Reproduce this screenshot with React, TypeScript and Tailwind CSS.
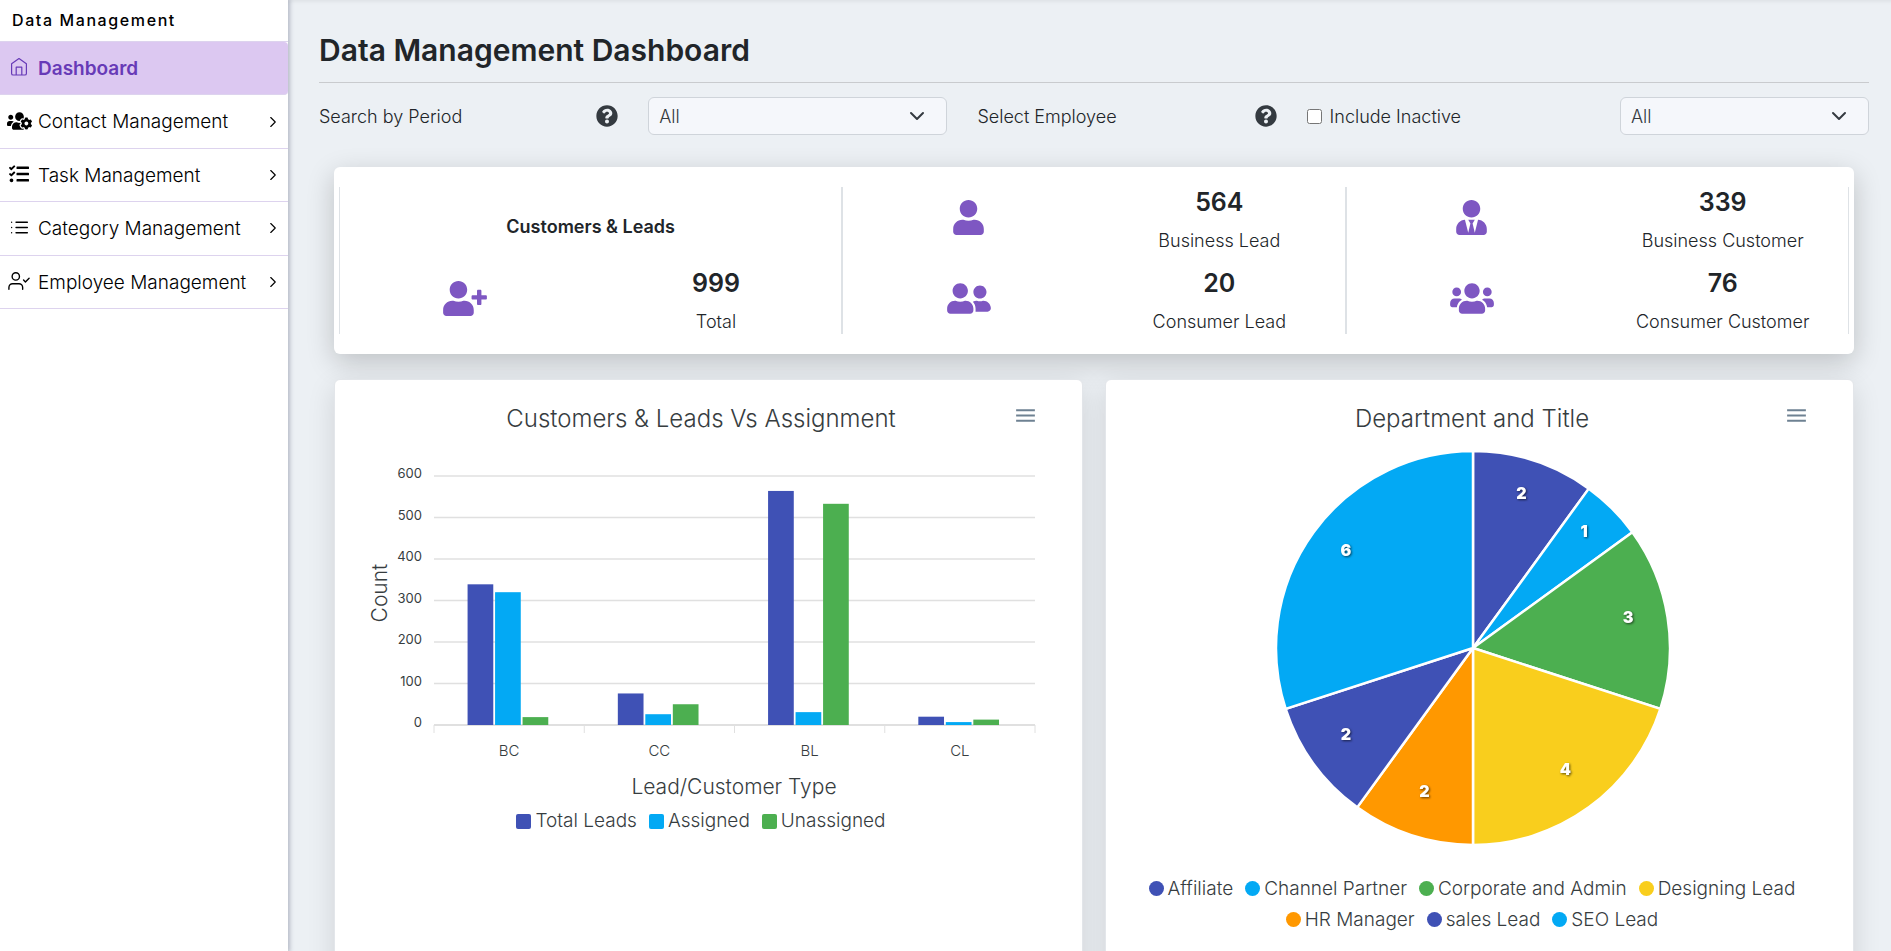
import { useState } from 'react'
import type { ReactNode } from 'react'
import {
  FaQuestionCircle,
  FaTasks,
  FaUser,
  FaUserFriends,
  FaUserPlus,
  FaUserTie,
  FaUsers,
  FaUsersCog,
} from 'react-icons/fa'
import { FiChevronRight, FiList, FiUserCheck } from 'react-icons/fi'
import { MdMenu } from 'react-icons/md'

const INDIGO = '#3f51b5'
const BLUE = '#03a9f4'
const GREEN = '#4caf50'
const YELLOW = '#f9ce1d'
const ORANGE = '#ff9800'

const menuItems = [
  { id: 'contact', label: 'Contact Management', icon: <FaUsersCog size={20} className="h-5 w-[25px]" /> },
  { id: 'task', label: 'Task Management', icon: <FaTasks size={20} /> },
  { id: 'category', label: 'Category Management', icon: <FiList size={21} strokeWidth={1.5} /> },
  { id: 'employee', label: 'Employee Management', icon: <FiUserCheck size={22} strokeWidth={1.5} /> },
]

const series = [
  { name: 'Total Leads', color: INDIGO, data: [339, 76, 564, 20] },
  { name: 'Assigned', color: BLUE, data: [320, 26, 31, 7] },
  { name: 'Unassigned', color: GREEN, data: [19, 50, 533, 13] },
]

const departments = [
  { name: 'Affiliate', value: 2, color: INDIGO },
  { name: 'Channel Partner', value: 1, color: BLUE },
  { name: 'Corporate and Admin', value: 3, color: GREEN },
  { name: 'Designing Lead', value: 4, color: YELLOW },
  { name: 'HR Manager', value: 2, color: ORANGE },
  { name: 'sales Lead', value: 2, color: INDIGO },
  { name: 'SEO Lead', value: 6, color: BLUE },
]

function HomeIcon() {
  return (
    <svg viewBox="0 0 18 20" className="h-5 w-[18px] fill-none stroke-current" strokeWidth="1.2" strokeLinejoin="round">
      <path d="M9 1.6 1.6 6.8V16.4a1.6 1.6 0 0 0 1.6 1.6h11.6a1.6 1.6 0 0 0 1.6-1.6V6.8Z" />
      <path d="M6.2 18V10.2h5.6V18" />
    </svg>
  )
}

function Sidebar() {
  return (
    <aside className="z-10 w-72 shrink-0 bg-white shadow-[1px_0_4px_1px_rgba(60,65,95,0.3)]">
      <div className="flex h-[42px] items-center border-b border-[#ddd3ee] pb-[2px] pl-3 text-[16px] font-medium tracking-widest text-black">
        Data Management
      </div>
      <nav className="grid h-[267px] grid-rows-5">
        <a href="#dashboard" className="flex items-center rounded-r-sm border-b border-[#ddd3ee] bg-[#dcc8f1] text-[#673ab7]">
          <span className="flex w-[38px] justify-center pb-[2px]">
            <HomeIcon />
          </span>
          <span className="pt-[2px] text-[19px] font-semibold">Dashboard</span>
        </a>
        {menuItems.map((item) => (
          <a key={item.id} href={`#${item.id}`} className="flex items-center border-b border-[#ddd3ee] text-black">
            <span className="flex w-[38px] shrink-0 justify-center pb-[2px]">{item.icon}</span>
            <span className="flex-1 pt-[2px] text-[19px] font-light whitespace-nowrap">{item.label}</span>
            <FiChevronRight size={18} strokeWidth={1.5} className="mr-[6px]" />
          </a>
        ))}
      </nav>
    </aside>
  )
}

function AllSelect({ id, label }: { id: string; label: string }) {
  return (
    <div className="relative">
      <select
        id={id}
        aria-label={label}
        className="h-[38px] w-full appearance-none rounded-md border border-[#cfd4da] bg-[#f5f7fb] pl-[10px] text-[18px] font-light text-[#343a40]"
      >
        <option>All</option>
      </select>
      <svg
        viewBox="0 0 16 16"
        className="pointer-events-none absolute top-[11px] right-[22px] h-4 w-4 fill-none stroke-[#343a40] stroke-2"
      >
        <path d="m2 5 6 6 6-6" strokeLinecap="round" strokeLinejoin="round" />
      </svg>
    </div>
  )
}

function Filters() {
  const [includeInactive, setIncludeInactive] = useState(false)

  return (
    <div className="mt-[14px] grid grid-cols-[299fr_299fr_299fr_562fr] items-center gap-[30px] text-[18px] font-light">
      <div className="flex items-center justify-between">
        <label htmlFor="period">Search by Period</label>
        <FaQuestionCircle size={22} className="text-[#343a40]" />
      </div>
      <AllSelect id="period" label="Search by Period" />
      <div className="flex items-center justify-between">
        <label htmlFor="employee">Select Employee</label>
        <FaQuestionCircle size={22} className="text-[#343a40]" />
      </div>
      <div className="flex items-center justify-between">
        <label className="flex items-center gap-2">
          <input
            type="checkbox"
            checked={includeInactive}
            onChange={(e) => setIncludeInactive(e.target.checked)}
            className="h-[15px] w-[15px]"
          />
          Include Inactive
        </label>
        <div className="w-[249px]">
          <AllSelect id="employee" label="Select Employee" />
        </div>
      </div>
    </div>
  )
}

function Stat({ icon, value, label }: { icon: ReactNode; value: number; label: string }) {
  return (
    <div className="grid h-[66px] grid-cols-2 text-center">
      <div className="flex justify-center pt-[13px] text-[35px] text-[#7e57c2]">{icon}</div>
      <div>
        <div className="text-[25px] leading-[30px] font-semibold">{value}</div>
        <div className="mt-3 text-[18px] leading-6 font-light whitespace-nowrap">{label}</div>
      </div>
    </div>
  )
}

function Summary() {
  return (
    <section className="mx-[15px] mt-8 grid grid-cols-3 rounded-md bg-white px-[5px] py-5 shadow-[0_8px_28px_rgba(0,0,0,0.2)]">
      <div className="space-y-[15px] border-x border-[#dee2e6]">
        <h2 className="h-[66px] pt-7 text-center text-[18px] leading-6 font-semibold">Customers &amp; Leads</h2>
        <Stat icon={<FaUserPlus className="h-[35px] w-11" />} value={999} label="Total" />
      </div>
      <div className="space-y-[15px] border-x border-[#dee2e6]">
        <Stat icon={<FaUser className="h-[35px] w-[31px]" />} value={564} label="Business Lead" />
        <Stat icon={<FaUserFriends className="h-[35px] w-11" />} value={20} label="Consumer Lead" />
      </div>
      <div className="space-y-[15px] border-x border-[#dee2e6]">
        <Stat icon={<FaUserTie className="h-[35px] w-[31px]" />} value={339} label="Business Customer" />
        <Stat icon={<FaUsers className="h-[35px] w-11" />} value={76} label="Consumer Customer" />
      </div>
    </section>
  )
}

function ChartCard({ title, children }: { title: string; children: ReactNode }) {
  return (
    <section className="min-h-[640px] rounded-md border border-[#e3e6ea] bg-white pt-[23px] pr-8 pl-[17px] text-[#373d3f] shadow-[0_8px_28px_rgba(0,0,0,0.12)]">
      <div className="grid grid-cols-[25px_1fr_25px] px-3">
        <h2 className="col-start-2 text-center text-[24px] leading-8 font-light">{title}</h2>
        <button aria-label={`${title} menu`} className="h-[25px] w-[25px] text-[#6e8192]">
          <MdMenu size={25} />
        </button>
      </div>
      {children}
    </section>
  )
}

function BarChart() {
  const categories = ['BC', 'CC', 'BL', 'CL']
  const left = 82
  const right = 683
  const base = 285
  const step = (right - left) / 4
  const barWidth = 27.5
  const y = (v: number) => base - v * 0.415

  return (
    <>
      <svg viewBox="0 0 698 362" className="mt-[5px] block w-full font-light" fill="#373d3f">
        {[0, 100, 200, 300, 400, 500, 600].map((v) => (
          <g key={v}>
            <line x1={left} x2={right} y1={y(v)} y2={y(v)} stroke="#e0e0e0" strokeWidth={v === 0 ? 2 : 1.3} />
            <text x={70} y={y(v) + 2} textAnchor="end" fontSize="13" fontWeight="400">
              {v}
            </text>
          </g>
        ))}
        {[0, 1, 2, 3, 4].map((i) => (
          <line key={i} x1={left + i * step} x2={left + i * step} y1={base} y2={base + 8} stroke="#e0e0e0" />
        ))}
        {categories.map((name, i) => (
          <g key={name}>
            {series.map((s, j) => (
              <rect
                key={s.name}
                x={left + (i + 0.5) * step + (j - 1.5) * barWidth - 0.3}
                y={y(s.data[i])}
                width={barWidth - 1.8}
                height={base - y(s.data[i])}
                fill={s.color}
              />
            ))}
            <text x={left + (i + 0.5) * step} y={316} textAnchor="middle" fontSize="15">
              {name}
            </text>
          </g>
        ))}
        <text x={382} y={354} textAnchor="middle" fontSize="21">
          Lead/Customer Type
        </text>
        <text x={35} y={153} textAnchor="middle" fontSize="21" transform="rotate(-90 35 153)">
          Count
        </text>
      </svg>
      <ul className="mt-[7px] flex justify-center gap-3 text-[19px] leading-6 font-light">
        {series.map((s) => (
          <li key={s.name} className="flex items-center gap-1">
            <span className="h-[15px] w-[15px] rounded-xs" style={{ background: s.color }} />
            {s.name}
          </li>
        ))}
      </ul>
    </>
  )
}

function PieChart() {
  const cx = 350
  const cy = 208
  const r = 197
  const total = departments.reduce((sum, d) => sum + d.value, 0)
  const point = (share: number, radius: number) => {
    const angle = share * 2 * Math.PI
    return [cx + radius * Math.sin(angle), cy - radius * Math.cos(angle)]
  }

  let sum = 0
  const slices = departments.map((d) => {
    const start = point(sum / total, r)
    const label = point((sum + d.value / 2) / total, 157)
    sum += d.value
    const end = point(sum / total, r)
    return { ...d, label, path: `M${cx} ${cy}L${start.join(' ')}A${r} ${r} 0 0 1 ${end.join(' ')}Z` }
  })

  return (
    <>
      <svg viewBox="0 0 698 430" className="mt-[5px] block w-full">
        {slices.map((s) => (
          <path key={s.name} d={s.path} fill={s.color} stroke="#fff" strokeWidth="2.5" />
        ))}
        {slices.map((s) => (
          <text
            key={s.name}
            x={s.label[0]}
            y={s.label[1]}
            textAnchor="middle"
            fill="#fff"
            fontSize="16"
            className="font-black [filter:drop-shadow(1px_1px_1px_rgba(0,0,0,0.6))]"
          >
            {s.value}
          </text>
        ))}
      </svg>
      <ul className="mt-[3px] flex flex-wrap justify-center gap-x-3 text-[19px] leading-[31px] font-light">
        {departments.map((d) => (
          <li key={d.name} className="flex items-center gap-1">
            <span className="h-[15px] w-[15px] rounded-full" style={{ background: d.color }} />
            {d.name}
          </li>
        ))}
      </ul>
    </>
  )
}

export default function App() {
  return (
    <div className="flex h-screen overflow-hidden bg-[#ecf0f4] font-['Inter',sans-serif] text-[#212529]">
      <Sidebar />
      <main className="min-w-0 flex-1 overflow-hidden pt-[33px] pr-[22px] pl-[31px] shadow-[inset_0_5px_4px_-4px_rgba(0,0,0,0.08)]">
        <h1 className="border-b border-[#c9cbce] pb-[15px] text-[30px] leading-[34px] font-semibold">
          Data Management Dashboard
        </h1>
        <Filters />
        <Summary />
        <div className="mx-[15px] mt-[25px] grid grid-cols-2 gap-[22px]">
          <ChartCard title="Customers &amp; Leads Vs Assignment">
            <BarChart />
          </ChartCard>
          <ChartCard title="Department and Title">
            <PieChart />
          </ChartCard>
        </div>
      </main>
    </div>
  )
}
